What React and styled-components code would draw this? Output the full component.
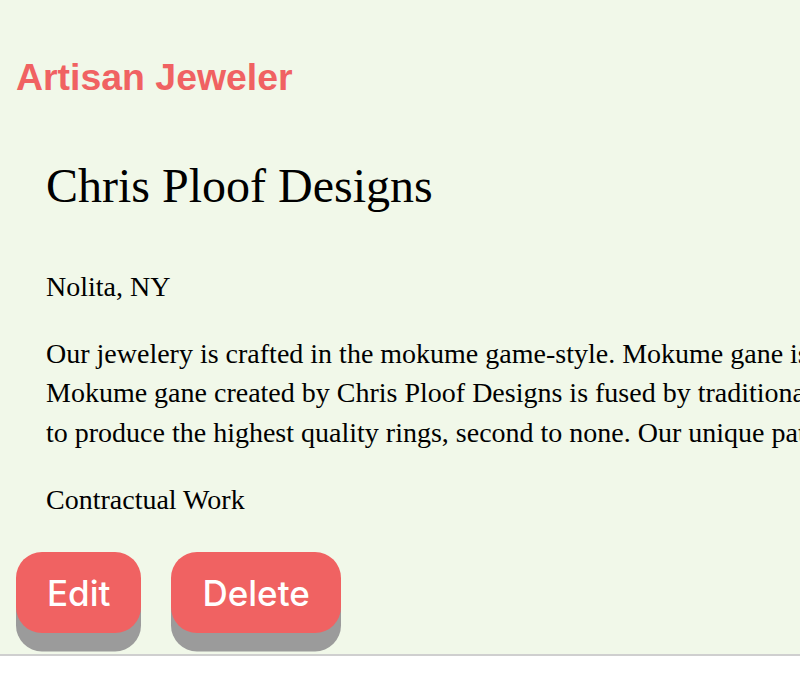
import React from "react";
import styled, { createGlobalStyle } from "styled-components";

const Global = createGlobalStyle`
  html, body { margin: 0; padding: 0; background: #ffffff; }
  body { overflow-x: hidden; font-family: "Liberation Serif", "Times New Roman", serif; }
`;

const Page = styled.div`
  background: #f1f8e9;
  border-bottom: 2px solid #cfcfcf;
  padding: 55px 0 20.7px 16px;
  display: flex;
  flex-direction: column;
`;

const Brand = styled.h1`
  margin: 0;
  font-family: "Liberation Sans", Arial, sans-serif;
  font-weight: 700;
  font-size: 37.44px;
  line-height: 44px;
  color: #f06262;
`;

const Card = styled.section`
  padding-left: 30px;
  display: flex;
  flex-direction: column;
`;

const Name = styled.h2`
  margin: 58.5px 0 0;
  font-family: "Liberation Serif", "Times New Roman", serif;
  font-weight: 400;
  font-size: 48px;
  line-height: 56px;
  color: #000;
`;

const Text = styled.p`
  margin: ${(p) => p.$gap}px 0 0;
  font-family: "Liberation Serif", "Times New Roman", serif;
  font-size: 28px;
  line-height: 39.2px;
  color: #000;
  white-space: nowrap;
`;

const Actions = styled.div`
  display: flex;
  gap: 30px;
  margin-top: 32.7px;
`;

const Button = styled.button`
  height: 81.6px;
  padding: 0 31px;
  border: none;
  border-radius: 26px;
  background: #f06262;
  color: #ffffff;
  font-family: Inter, "Noto Sans", sans-serif;
  font-size: 35px;
  font-weight: 500;
  box-shadow: 0 18.4px 0 #9b9b9b;
  cursor: pointer;
`;

export default function App() {
  return (
    <>
      <Global />
      <Page>
        <Brand>Artisan Jeweler</Brand>
        <Card>
          <Name>Chris Ploof Designs</Name>
          <Text $gap={53.5}>Nolita, NY</Text>
          <Text $gap={28}>
            Our jewelery is crafted in the mokume game-style. Mokume gane is a Japanese metalworking process,
            <br />
            Mokume gane created by Chris Ploof Designs is fused by traditional methods and modern technology
            <br />
            to produce the highest quality rings, second to none. Our unique patterns are one of a kind.
          </Text>
          <Text $gap={28}>Contractual Work</Text>
        </Card>
        <Actions>
          <Button>Edit</Button>
          <Button>Delete</Button>
        </Actions>
      </Page>
    </>
  );
}
